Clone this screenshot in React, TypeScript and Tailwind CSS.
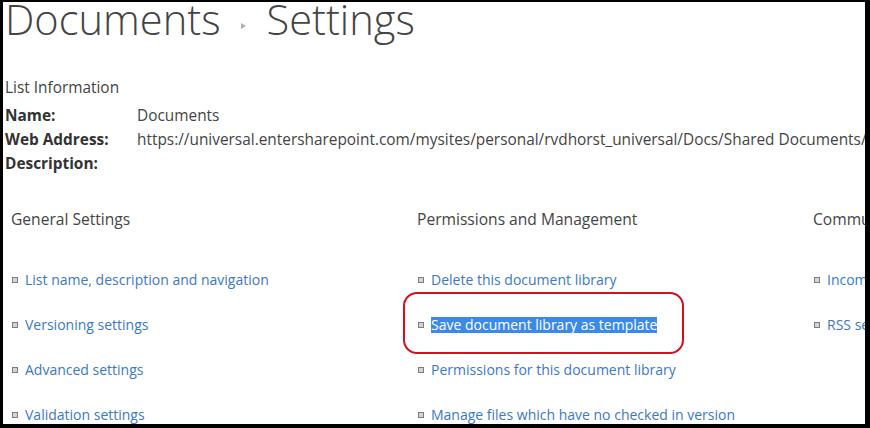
const general = [
  "List name, description and navigation",
  "Versioning settings",
  "Advanced settings",
  "Validation settings",
];

const permissions = [
  "Delete this document library",
  "Save document library as template",
  "Permissions for this document library",
  "Manage files which have no checked in version",
];

const communications = ["Incoming e-mail settings", "RSS settings"];

function Bullet() {
  return <span className="mr-[7px] inline-block h-[6px] w-[6px] shrink-0 border border-[#7d7d7d] bg-[#d4d4d4]" />;
}

function LinkRow({ label, marked }: { label: string; marked?: boolean }) {
  return (
    <li className="relative flex h-[45px] items-center whitespace-nowrap pl-px">
      <Bullet />
      {marked ? (
        <>
          <span className="bg-[#3b8be6] leading-[16px] text-white">{label}</span>
          <span className="pointer-events-none absolute left-[-14px] top-[-10px] h-[62px] w-[281px] rounded-[14px] border-2 border-[#d4101f]" />
        </>
      ) : (
        <span className="text-[#3a78c8]">{label}</span>
      )}
    </li>
  );
}

function Section({ title, links, marked }: { title: string; links: string[]; marked?: string }) {
  return (
    <div className="flex flex-col">
      <h2 className="whitespace-nowrap text-[15.6px] leading-[20px] text-[#444]">{title}</h2>
      <ul className="mt-[28px] text-[14px]">
        {links.map((l) => (
          <LinkRow key={l} label={l} marked={l === marked} />
        ))}
      </ul>
    </div>
  );
}

export default function App() {
  return (
    <div
      className="h-[428px] w-[870px] overflow-hidden border-b-[4px] border-l-[3px] border-r-[5px] border-t-[2px] border-black bg-white text-[#444]"
      style={{ fontFamily: '"Open Sans", "Noto Sans", sans-serif' }}
    >
      <div className="flex h-full flex-col pl-[2px]">
        <h1 className="flex h-[34px] items-baseline whitespace-nowrap text-[41.6px] font-light leading-[34px] text-[#444]">
          <span>Documents</span>
          <svg className="mb-[7px] ml-[20px] mr-[21px] self-end" width="5" height="6" viewBox="0 0 5 6">
            <path d="M0 0 L5 3 L0 6 Z" fill="#b0b0b0" />
          </svg>
          <span>Settings</span>
        </h1>

        <div className="mt-[42px] text-[15.4px]">
          <p className="leading-[20px]">List Information</p>
          <div className="mt-[6px] grid grid-cols-[132px_1fr] leading-[24px]">
            <span className="font-bold text-[#333]">Name:</span>
            <span>Documents</span>
            <span className="font-bold text-[#333]">Web Address:</span>
            <span className="whitespace-nowrap">
              https://universal.entersharepoint.com/mysites/personal/rvdhorst_universal/Docs/Shared Documents/Forms/AllItems.aspx
            </span>
            <span className="font-bold text-[#333]">Description:</span>
            <span />
          </div>
        </div>

        <div className="mt-[33px] grid grid-cols-[406px_396px_406px] pl-[6px]">
          <Section title="General Settings" links={general} />
          <Section
            title="Permissions and Management"
            links={permissions}
            marked="Save document library as template"
          />
          <Section title="Communications" links={communications} />
        </div>
      </div>
    </div>
  );
}
